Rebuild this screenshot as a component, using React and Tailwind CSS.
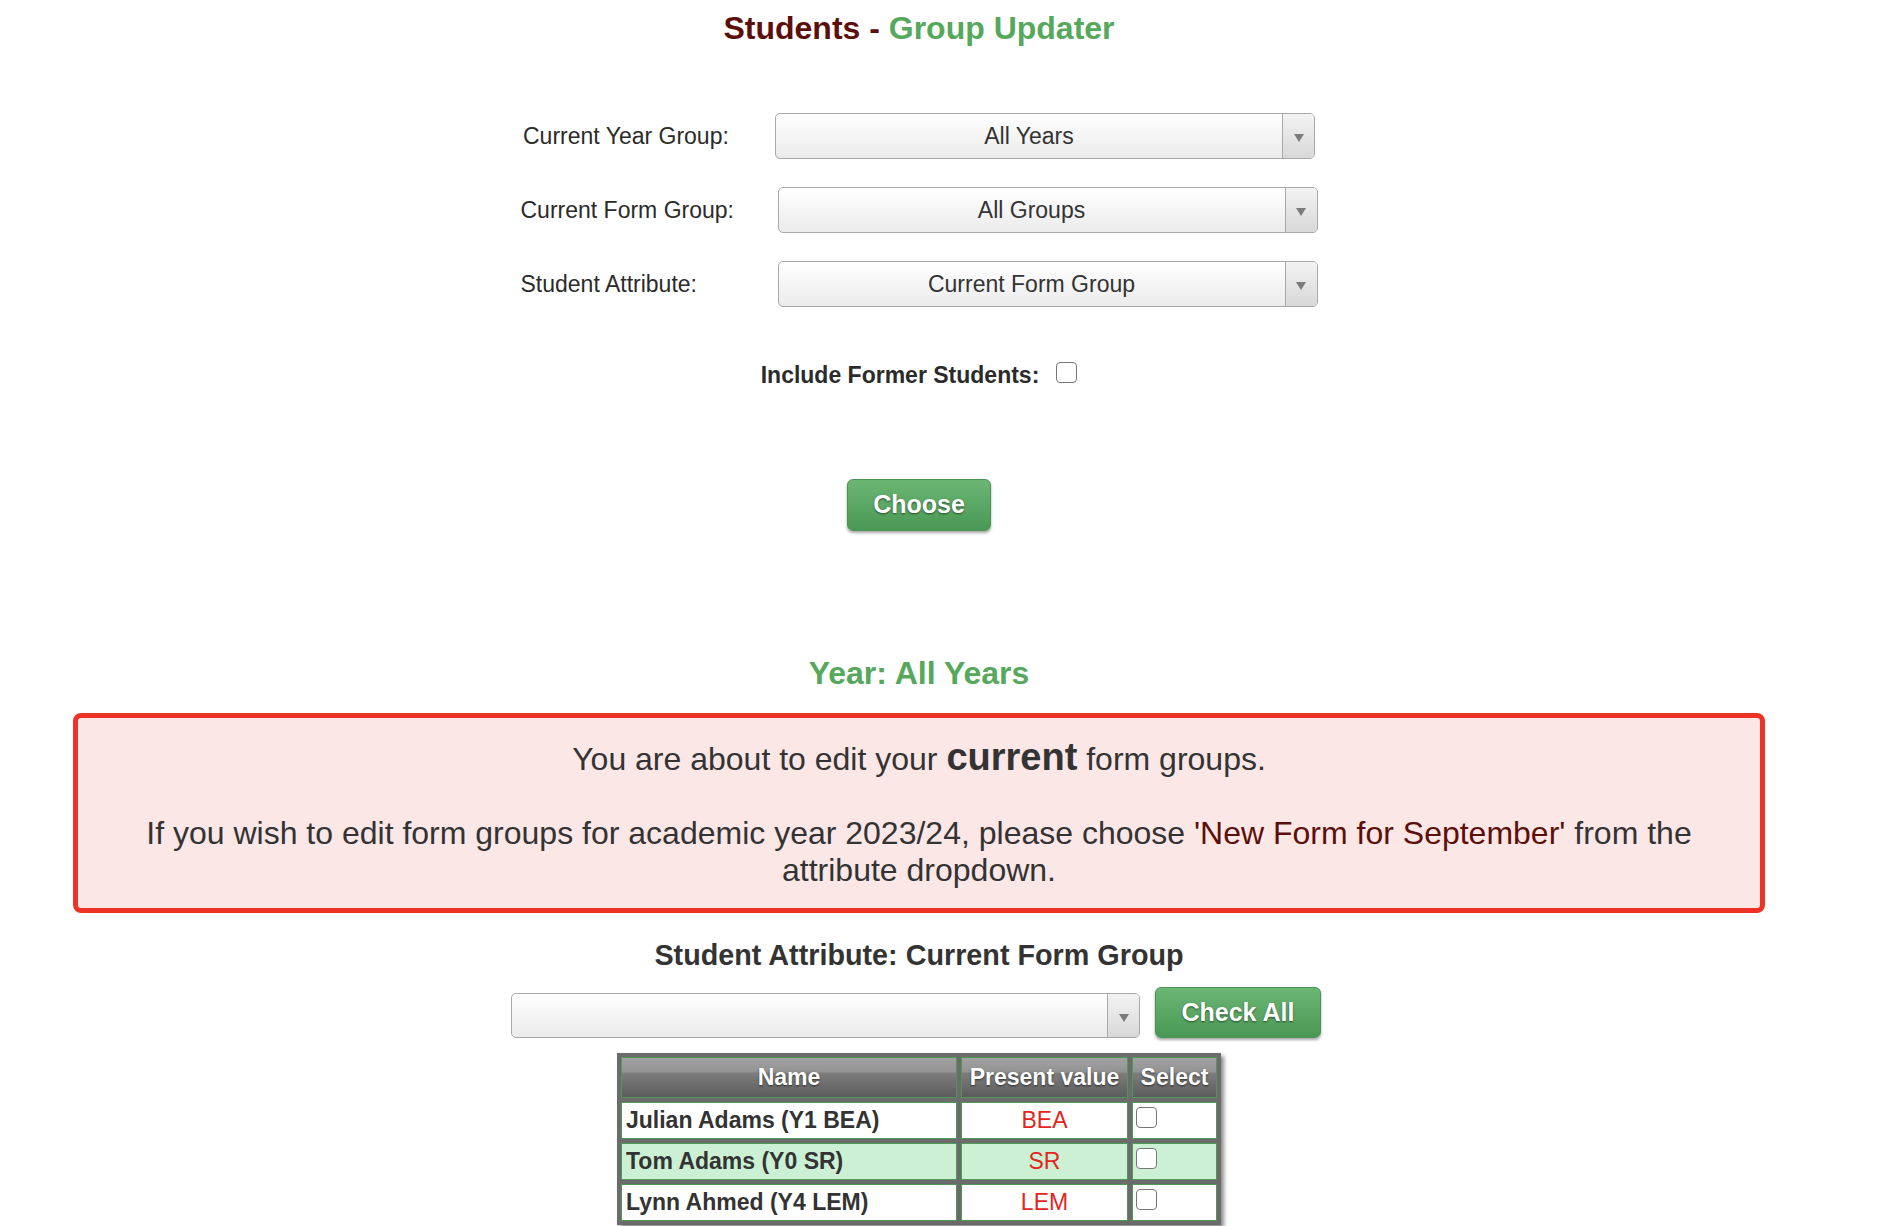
import { useState } from "react";

// Dropdown drawn to look like the old jQuery-UI style select
function FakeSelect({ value, className }) {
  return (
    <div
      className={`flex overflow-hidden rounded-[5px] border border-[#a8a8a8] bg-[linear-gradient(#ffffff,#ebebeb)] ${className}`}
    >
      <div className="flex flex-1 items-center justify-center text-[23px] text-[#333]">
        {value}
      </div>
      <div className="flex w-[32px] items-center justify-center border-l border-[#a8a8a8] bg-[linear-gradient(#f3f3f3,#d8d8d8)] pt-[4px]">
        <svg width="10" height="8" viewBox="0 0 10 8">
          <path d="M0 0h10L5 8z" fill="#7b7b7b" />
        </svg>
      </div>
    </div>
  );
}

function Box({ checked, onChange, className = "" }) {
  return (
    <input
      type="checkbox"
      checked={checked}
      onChange={onChange}
      className={`h-[21px] w-[21px] appearance-none rounded-[4px] border-[1.5px] border-[#777] bg-white checked:bg-[#4c9a55] ${className}`}
    />
  );
}

function GreenButton({ children, className }) {
  return (
    <button
      className={`rounded-[6px] border border-[#4a9353] bg-[linear-gradient(#6cb674,#4a9855)] text-[25px] font-bold text-white shadow-[0_2px_3px_rgba(0,0,0,0.35)] [text-shadow:0_1px_2px_rgba(0,0,0,0.55)] ${className}`}
    >
      {children}
    </button>
  );
}

const students = [
  { name: "Julian Adams (Y1 BEA)", value: "BEA" },
  { name: "Tom Adams (Y0 SR)", value: "SR" },
  { name: "Lynn Ahmed (Y4 LEM)", value: "LEM" },
];

export default function App() {
  const [former, setFormer] = useState(false);
  const [selected, setSelected] = useState([false, false, false]);

  const th =
    "h-[41px] border border-[#4c9a55] bg-[linear-gradient(#a2a2a2_0%,#939393_35%,#7c7c7c_40%,#5c5c5c_100%)] p-0 text-center text-[23px] font-bold text-white [text-shadow:0_1px_2px_rgba(0,0,0,0.6)]";

  return (
    <div className="w-[1838px] bg-white pb-[40px] font-['Liberation_Sans',Arial,sans-serif] text-[#333]">
      <h1 className="pt-[10px] text-center text-[32px] font-bold leading-[37px]">
        <span className="text-[#5c0f0a]">Students - </span>
        <span className="text-[#55a85c]">Group Updater</span>
      </h1>

      {/* filter form */}
      <div className="mt-[66px] flex items-center justify-center">
        <div className="w-[252px] text-[23px] text-[#2b2b2b]">Current Year Group:</div>
        <FakeSelect value="All Years" className="h-[46px] w-[540px]" />
      </div>
      <div className="mt-[28px] flex items-center justify-center">
        <div className="w-[257px] text-[23px] text-[#2b2b2b]">Current Form Group:</div>
        <FakeSelect value="All Groups" className="h-[46px] w-[540px]" />
      </div>
      <div className="mt-[28px] flex items-center justify-center">
        <div className="w-[257px] text-[23px] text-[#2b2b2b]">Student Attribute:</div>
        <FakeSelect value="Current Form Group" className="h-[46px] w-[540px]" />
      </div>

      <div className="mt-[55px] flex items-start justify-center gap-[17px]">
        <span className="text-[23px] font-bold leading-[27px] text-[#2b2b2b]">
          Include Former Students:
        </span>
        <Box checked={former} onChange={() => setFormer(!former)} />
      </div>

      <div className="mt-[90px] flex justify-center">
        <GreenButton className="h-[52px] w-[144px]">Choose</GreenButton>
      </div>

      <h2 className="mt-[124px] text-center text-[32px] font-bold leading-[37px] text-[#55a85c]">
        Year: All Years
      </h2>

      {/* warning */}
      <div className="mx-[73px] mt-[21px] rounded-[8px] border-[5px] border-[#ec3326] bg-[#fce7e7] px-[50px] pt-[21px] pb-[19px] text-center text-[32px] leading-[37px] text-[#333]">
        You are about to edit your{" "}
        <b className="inline-block h-[37px] text-[38px] leading-[37px]">current</b> form
        groups.
        <br />
        <br />
        If you wish to edit form groups for academic year 2023/24, please choose{" "}
        <span className="text-[#5c0f0a]">'New Form for September'</span> from the
        <br />
        attribute dropdown.
      </div>

      <h3 className="mt-[26px] text-center text-[28.75px] font-bold leading-[33px] text-[#333]">
        Student Attribute: Current Form Group
      </h3>

      <div className="mt-[15px] flex items-end justify-center gap-[15px] pr-[6px]">
        <FakeSelect value="" className="h-[45px] w-[629px]" />
        <GreenButton className="h-[51px] w-[166px]">Check All</GreenButton>
      </div>

      {/* student table */}
      <table className="mx-auto mt-[15px] table-fixed border-separate border-spacing-[4px] bg-[#6b6b6b] shadow-[3px_3px_4px_rgba(0,0,0,0.45)]">
        <thead>
          <tr>
            <th className={`${th} w-[336px]`}>Name</th>
            <th className={`${th} w-[167px]`}>Present value</th>
            <th className={`${th} w-[85px]`}>Select</th>
          </tr>
        </thead>
        <tbody>
          {students.map((s, i) => {
            const bg = i % 2 === 1 ? "bg-[#cbf0d4]" : "bg-white";
            return (
              <tr key={s.name}>
                <td className={`h-[37px] border border-[#4c9a55] ${bg} px-[4px] py-0 text-[23px] font-bold text-[#333]`}>
                  {s.name}
                </td>
                <td className={`h-[37px] border border-[#4c9a55] ${bg} p-0 text-center text-[23px] text-[#e3261d]`}>
                  {s.value}
                </td>
                <td className={`h-[37px] border border-[#4c9a55] ${bg} px-[3px] pt-[4px] pb-0 align-top`}>
                  <Box
                    checked={selected[i]}
                    onChange={() =>
                      setSelected(selected.map((v, j) => (j === i ? !v : v)))
                    }
                    className="block"
                  />
                </td>
              </tr>
            );
          })}
        </tbody>
      </table>
    </div>
  );
}
